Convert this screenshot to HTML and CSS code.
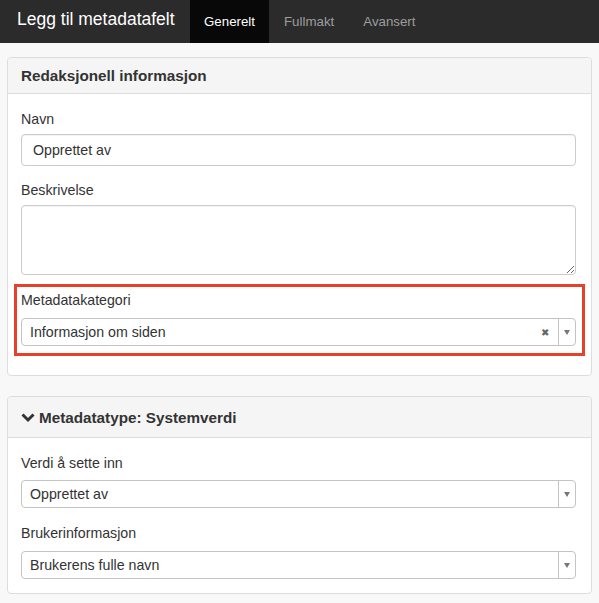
FILE: index.html
```html
<!DOCTYPE html>
<html lang="no">
<head>
<meta charset="utf-8">
<title>Legg til metadatafelt</title>
<link rel="stylesheet" href="styles.css">
</head>
<body>
<header class="topbar">
  <div class="brand">Legg til metadatafelt</div>
  <nav class="tabs">
    <a class="tab active">Generelt</a>
    <a class="tab">Fullmakt</a>
    <a class="tab">Avansert</a>
  </nav>
</header>
<main class="content">
  <section class="panel panel-first">
    <div class="panel-heading">Redaksjonell informasjon</div>
    <div class="panel-body">
      <div class="group">
        <label class="label">Navn</label>
        <input class="input" type="text" value="Opprettet av">
      </div>
      <div class="group">
        <label class="label">Beskrivelse</label>
        <textarea class="textarea"></textarea>
      </div>
      <div class="highlight">
        <label class="label">Metadatakategori</label>
        <div class="select">
          <span class="select-value">Informasjon om siden</span>
          <span class="select-clear">&#x2716;</span>
          <span class="select-arrow"><span class="caret"></span></span>
        </div>
      </div>
    </div>
  </section>
  <section class="panel panel-second">
    <div class="panel-heading tall">
      <svg class="chevron" viewBox="0 0 14 10" width="14" height="10"><path d="M1.5 1.5 L7 7 L12.5 1.5" fill="none" stroke="#333" stroke-width="3"/></svg>
      Metadatatype: Systemverdi
    </div>
    <div class="panel-body">
      <div class="group">
        <label class="label">Verdi å sette inn</label>
        <div class="select">
          <span class="select-value">Opprettet av</span>
          <span class="select-arrow"><span class="caret"></span></span>
        </div>
      </div>
      <div class="group last">
        <label class="label">Brukerinformasjon</label>
        <div class="select">
          <span class="select-value">Brukerens fulle navn</span>
          <span class="select-arrow"><span class="caret"></span></span>
        </div>
      </div>
    </div>
  </section>
</main>
</body>
</html>
```
FILE: styles.css
```css
* { box-sizing: border-box; }
html, body {
  margin: 0;
  padding: 0;
  background: #f8f8f8;
  font-family: "Liberation Sans", Arial, sans-serif;
  color: #333;
  font-size: 14px;
}
.topbar {
  height: 43px;
  background: #2b2b2b;
  display: flex;
  align-items: stretch;
}
.brand {
  color: #fff;
  font-size: 17.5px;
  line-height: 43px;
  padding: 0 0 0 17px;
  width: 190px;
  flex-shrink: 0;
  white-space: nowrap;
  margin-top: -2px;
}
.tabs { display: flex; }
.tab {
  display: block;
  color: #9d9d9d;
  font-size: 13.3px;
  line-height: 43px;
  padding: 0 14px;
  margin-top: -6px;
  padding-top: 6px;
  white-space: nowrap;
}
.tab.active {
  background: #080808;
  color: #fff;
}
.tab + .tab { margin-left: 1px; }
.content {
  padding: 14px 7px 0 7px;
}
.panel {
  background: #fff;
  border: 1px solid #dddddd;
  border-radius: 4px;
  margin-bottom: 20px;
}
.panel-heading {
  background: #f5f5f5;
  border-bottom: 1px solid #dddddd;
  border-radius: 3px 3px 0 0;
  height: 36px;
  padding: 0 13px;
  font-size: 15.25px;
  font-weight: bold;
  line-height: 35px;
  display: flex;
  align-items: center;
}
.panel-heading.tall {
  height: 41px;
}
.chevron { margin-right: 4px; margin-top: 1px; }
.panel-body {
  padding: 15px 15px 19px 13px;
}
.panel-second .panel-body { padding-bottom: 14px; }
.label {
  display: block;
  line-height: 20px;
  font-size: 14.2px;
}
.group { margin-bottom: 14px; }
.panel-second .group { margin-bottom: 15px; }
.panel-second .group.last { margin-bottom: 0; }
.input {
  display: block;
  width: 100%;
  height: 32px;
  margin-top: 5px;
  border: 1px solid #cccccc;
  border-radius: 4px;
  padding: 0 11px;
  font: 14.2px "Liberation Sans", Arial, sans-serif;
  color: #333;
  box-shadow: inset 0 1px 1px rgba(0,0,0,0.05);
}
.textarea {
  display: block;
  width: 100%;
  height: 70px;
  margin-top: 5px;
  border: 1px solid #cccccc;
  border-radius: 4px;
  box-shadow: inset 0 1px 1px rgba(0,0,0,0.05);
  font: 14px "Liberation Sans", Arial, sans-serif;
  resize: vertical;
}
.highlight {
  border: 3px solid #e8412b;
  margin: -5px -9px 0 -7px;
  padding: 3px 6px 7px 4px;
}
.select {
  display: flex;
  align-items: center;
  height: 28px;
  margin-top: 8px;
  border: 1px solid #c4c4c4;
  border-radius: 4px;
  background: #fff;
}
.group .select { margin-top: 7px; }
.group.last .select { margin-top: 8px; }
.select-value {
  flex: 1;
  padding-left: 8px;
  font-size: 14.2px;
}
.select-clear {
  font-size: 10px;
  color: #666;
  width: 20px;
  text-align: center;
  margin-right: 3px;
}
.select-arrow {
  width: 17px;
  height: 100%;
  border-left: 1px solid #c4c4c4;
  display: flex;
  align-items: center;
  justify-content: center;
}
.caret {
  width: 0;
  height: 0;
  border-left: 3.5px solid transparent;
  border-right: 3.5px solid transparent;
  border-top: 5px solid #777;
}
```
